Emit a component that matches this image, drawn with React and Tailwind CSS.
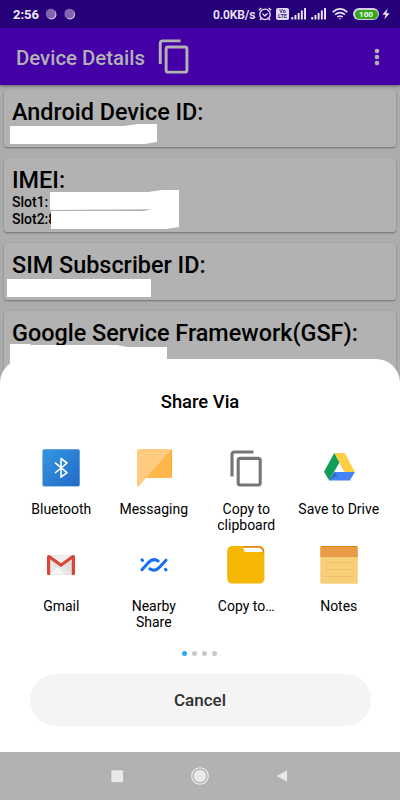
import React from 'react';

const apps = [
  { label: 'Bluetooth', Icon: BluetoothIcon },
  { label: 'Messaging', Icon: MessagingIcon },
  { label: 'Copy to clipboard', Icon: ClipboardIcon },
  { label: 'Save to Drive', Icon: DriveIcon },
  { label: 'Gmail', Icon: GmailIcon },
  { label: 'Nearby Share', Icon: NearbyIcon },
  { label: 'Copy to…', Icon: FolderIcon },
  { label: 'Notes', Icon: NotesIcon },
];

function CopyIcon({ className }) {
  return (
    <svg viewBox="0 0 32 37" className={className} fill="none" stroke="currentColor" strokeWidth="3.1">
      <path d="M2 26.5V4.5Q2 2 4.5 2H23.5" />
      <rect x="8.2" y="8.4" width="22" height="26.6" rx="2" />
    </svg>
  );
}

function BluetoothIcon() {
  return (
    <svg viewBox="0 0 40 40" className="size-10">
      <defs>
        <linearGradient id="bt" x1="0" y1="0" x2="1" y2="1">
          <stop offset="0" stopColor="#3595e2" />
          <stop offset="1" stopColor="#216bc5" />
        </linearGradient>
      </defs>
      <rect x="1.2" y="1" width="37.8" height="37.8" rx="2" fill="#8bbdec" />
      <rect x="1.8" y="1.4" width="36.6" height="36.6" rx="1.6" fill="url(#bt)" />
      <path d="M14 14.6L26 24.7L20 29.2V10.5L26 15L14 25" fill="none" stroke="#fff" strokeWidth="1.6" strokeLinejoin="round" />
    </svg>
  );
}

function MessagingIcon() {
  return (
    <svg viewBox="0 0 40 40" className="size-10">
      <path d="M3.4 1H36Q38 1 38 3V28Q38 30 36 30H12L4.8 38.2Q3 39.4 3 37V2.5Q3 1 5 1Z" fill="#ffcb80" />
      <path d="M37.3 1.6Q38 2 38 3V28Q38 30 36 30H11.6Z" fill="#ffb64c" />
      <path d="M37.5 2V28" stroke="#ffac15" strokeWidth="1" />
    </svg>
  );
}

function ClipboardIcon() {
  return (
    <div className="flex size-10 items-center justify-center text-[#757575]">
      <CopyIcon className="h-[37px] w-8" />
    </div>
  );
}

function DriveIcon() {
  return (
    <svg viewBox="0 0 40 40" className="size-10">
      <path d="M15.2 5H25.6L36 24H25.5Z" fill="#ffcd40" />
      <path d="M15.2 5L20.4 14.4L10.2 32.6L5 23.8Z" fill="#109d59" />
      <path d="M15.5 24H36L30.8 32.6H10.2Z" fill="#4284f3" />
      <path d="M15.5 24L18.5 27.5L10.2 32.6Z" fill="#3568cc" />
    </svg>
  );
}

function GmailIcon() {
  return (
    <svg viewBox="0 0 40 40" className="size-10">
      <rect x="6" y="10" width="28" height="20" rx="1.5" fill="#e8e8e8" />
      <path d="M9 29L20 20.5L31 29Z" fill="#f6f6f6" />
      <path d="M9 15L25 30H34V17Z" fill="#d5d5d5" opacity=".5" />
      <path d="M9 11H31L20 19Z" fill="#f1f1f1" />
      <path d="M6 11.5Q6 9.9 7.7 9.9Q8.6 9.9 9.3 10.4L20 18.2L30.7 10.4Q31.4 9.9 32.3 9.9Q34 9.9 34 11.5V28.5Q34 30 32.5 30H30.8V14.2L20 22L9.2 14.2V30H7.5Q6 30 6 28.5Z" fill="#db4437" />
    </svg>
  );
}

function NearbyIcon() {
  return (
    <svg viewBox="0 0 40 40" className="size-10" fill="none" stroke="#1670f3" strokeWidth="3" strokeLinecap="round">
      <path d="M8 24.8L13.8 18.2Q19 12.3 24.2 16" />
      <path d="M15.8 23.8Q21 27.5 26.2 21.6L32 15.2" />
      <path d="M8 14.9L8.6 15.5M31.4 24.3L32 24.9" />
    </svg>
  );
}

function FolderIcon() {
  return (
    <svg viewBox="0 0 40 40" className="size-10">
      <rect x="1.2" y="1" width="37.2" height="37.6" rx="5" fill="#f6b604" />
      <path d="M16.5 1.2H33Q38 2 38.2 7.5H36Q36 4 33 3H17.5Z" fill="#df8310" />
      <path d="M17 2.8H33Q36.2 3.4 36.6 7H20Q18.5 7 18 5.5Z" fill="#fff" />
    </svg>
  );
}

function NotesIcon() {
  return (
    <svg viewBox="0 0 40 40" className="size-10">
      <rect x="1.3" y="1" width="37.5" height="37.8" rx="1.5" fill="#f7cf78" />
      <path d="M1.3 12V2.5Q1.3 1 3 1H37Q38.8 1 38.8 2.5V12Z" fill="#e99b47" />
      <path d="M2 1.5H38" stroke="#dc8500" />
      <path d="M6 17.5H34M6 24.5H34M6 31.5H34" stroke="#efc067" />
    </svg>
  );
}

function SignalIcon() {
  return (
    <svg viewBox="0 0 16 12" className="h-3 w-4" fill="currentColor">
      <rect x="0.3" y="9" width="1.9" height="2.5" />
      <rect x="3.5" y="7" width="1.9" height="4.5" />
      <rect x="6.7" y="5" width="1.9" height="6.5" />
      <rect x="9.9" y="2.5" width="1.9" height="9" />
      <rect x="13.1" y="0" width="1.9" height="11.5" />
    </svg>
  );
}

function StatusBar() {
  return (
    <div className="flex h-7 items-center bg-[#26007b] pl-[13px] text-[#ece8f6]">
      <span className="w-[32px] pt-px text-[13px] leading-7 font-bold">2:56</span>
      <svg viewBox="0 0 31 12" className="h-3 w-[31px]">
        <circle cx="6.4" cy="6.4" r="5" fill="#e4dcf0" />
        <circle cx="5.7" cy="5.7" r="4.9" fill="#7f65af" />
        <circle cx="25" cy="6.4" r="5" fill="#e4dcf0" />
        <circle cx="24.3" cy="5.7" r="4.9" fill="#7f65af" />
      </svg>
      <span className="ml-[137px] w-[45px] pt-px text-[12px] font-semibold tracking-[-0.1px] whitespace-nowrap">0.0KB/s</span>
      <svg viewBox="0 0 14 14" className="h-3.5 w-3.5" fill="none" stroke="currentColor" strokeWidth="1.3">
        <circle cx="7" cy="7.4" r="5.2" />
        <path d="M4.5 6.6L6.8 8.8L9.6 6.6M.8 3.2L3.4 .9M13.2 3.2L10.6 .9M3.3 11.5L2 13.2M10.7 11.5L12 13.2" />
      </svg>
      <div className="ml-1 flex h-3 w-[13px] shrink-0 flex-col items-center justify-center rounded-xs bg-[#e3dcf0] text-[5.5px] leading-[5px] font-bold text-[#3c1b85]">
        <span>Vo</span>
        <span>LTE</span>
      </div>
      <div className="ml-0.5"><SignalIcon /></div>
      <div className="ml-1"><SignalIcon /></div>
      <svg viewBox="0 0 16 12" className="ml-[5px] h-3 w-4" fill="none" stroke="currentColor" strokeWidth="1.7">
        <path d="M.7 4.1Q8-2.2 15.3 4.1M3.1 6.7Q8 2.5 12.9 6.7M5.4 9Q8 7 10.6 9" />
        <circle cx="8" cy="10.7" r=".8" fill="currentColor" stroke="none" />
      </svg>
      <div className="ml-[5px] flex h-3 w-[26px] items-center justify-center rounded-full bg-[#d5cdea] p-[1.5px]">
        <div className="h-[9px] w-full rounded-full bg-[#36a51a] text-center text-[8px] leading-[9px] font-bold text-white">100</div>
      </div>
      <svg viewBox="0 0 8 12" className="ml-[3px] h-3 w-2" fill="currentColor">
        <path d="M5.7.5L.4 6.7H3.7L2.2 11.6L7.7 5.2H4.4Z" />
      </svg>
    </div>
  );
}

function InfoCard({ title, className, children }) {
  return (
    <div className={`relative rounded-[3px] bg-[#b2b2b2] px-2 shadow-[0_1px_2px_rgba(0,0,0,0.35)] ${className}`}>
      <h2 className="pt-[9px] text-[23.4px] leading-[27px] font-medium whitespace-nowrap">{title}</h2>
      {children}
    </div>
  );
}

// White marker strokes that hide the identifiers
function Redaction({ points }) {
  return (
    <svg viewBox="0 0 392 80" className="absolute top-0 left-0 h-20 w-[392px] overflow-visible" fill="#fff">
      {points.map((p) => (
        <polygon key={p} points={p} />
      ))}
    </svg>
  );
}

function ShareSheet() {
  return (
    <div className="absolute inset-x-0 top-[359px] flex h-[393px] flex-col items-center rounded-t-[24px] bg-white">
      <h3 className="mt-[31px] text-[18.4px] leading-6 font-medium">Share Via</h3>
      <div className="mt-[34px] grid w-[370px] grid-cols-4 grid-rows-[97px_97px]">
        {apps.map(({ label, Icon }) => (
          <div key={label} className="flex flex-col items-center">
            <Icon />
            <span className="mt-[13px] max-w-[82px] text-center text-[14px] leading-4">{label}</span>
          </div>
        ))}
      </div>
      <div className="mt-[9px] mr-px flex gap-[5.3px]">
        <span className="size-[5px] rounded-full bg-[#25aaf5]" />
        <span className="size-[5px] rounded-full bg-[#c9c9c9]" />
        <span className="size-[5px] rounded-full bg-[#c9c9c9]" />
        <span className="size-[5px] rounded-full bg-[#c9c9c9]" />
      </div>
      <button className="mt-[18px] h-[52px] w-[341px] rounded-full bg-[#f4f4f4] pt-0.5 text-[17px] font-medium text-[#303030]">Cancel</button>
    </div>
  );
}

export default function App() {
  return (
    <div className="relative flex h-[800px] w-[400px] flex-col overflow-hidden bg-[#acacac] font-['Roboto',sans-serif] text-black">
      <StatusBar />
      <header className="flex h-[57px] shrink-0 items-center bg-[#4400a6] pl-4 text-[#b2b2b2] shadow-[0_1px_3px_rgba(0,0,0,0.45)]">
        <h1 className="w-[142px] pt-[3px] text-[20.4px] font-medium whitespace-nowrap">Device Details</h1>
        <CopyIcon className="h-[35px] w-[31px]" />
        <svg viewBox="0 0 6 18" className="ml-[185px] h-[18px] w-1.5" fill="currentColor">
          <circle cx="3" cy="3" r="2.3" />
          <circle cx="3" cy="9" r="2.3" />
          <circle cx="3" cy="15" r="2.3" />
        </svg>
      </header>
      <main className="flex grow flex-col gap-[11px] px-1 pt-[5px]">
        <InfoCard title="Android Device ID:" className="h-[57px]">
          <Redaction points={['6,36 120,36 134,34 153,34 153,52 140,54 6,54']} />
        </InfoCard>
        <InfoCard title="IMEI:" className="h-[74px]">
          <p className="text-[14px] leading-[17px] font-medium">Slot1:</p>
          <p className="text-[14px] leading-[17px] font-medium">Slot2:8</p>
          <Redaction points={['46,34 144,34 158,32 175,32 175,51 46,52', '47,53 140,53 148,51 175,51 175,69 162,71 47,71']} />
        </InfoCard>
        <InfoCard title="SIM Subscriber ID:" className="h-[57px]">
          <Redaction points={['3,36 147,36 147,54 3,54']} />
        </InfoCard>
        <InfoCard title="Google Service Framework(GSF):" className="h-[75px]">
          <Redaction points={['6,33 26,33 27,34 113,34 123,36 163,36 163,52 6,52']} />
        </InfoCard>
      </main>
      <nav className="flex h-12 shrink-0 items-center justify-center gap-16 bg-[#b2b2b2] text-[#e9e9e9]">
        <svg viewBox="0 0 18 18" className="size-[18px]" fill="currentColor">
          <rect x="2" y="3" width="12.5" height="12.5" rx="1" stroke="#a2a2a2" strokeWidth=".5" />
        </svg>
        <svg viewBox="0 0 18 18" className="size-[18px]" fill="currentColor">
          <circle cx="9" cy="9" r="8.2" fill="none" stroke="currentColor" strokeWidth="1.3" />
          <circle cx="9" cy="9" r="6.7" stroke="#a2a2a2" strokeWidth=".7" />
        </svg>
        <svg viewBox="0 0 18 18" className="size-[18px]" fill="currentColor">
          <path d="M3 9L14.5 2.7V15.3Z" stroke="#a2a2a2" strokeWidth=".5" />
        </svg>
      </nav>
      <ShareSheet />
    </div>
  );
}
